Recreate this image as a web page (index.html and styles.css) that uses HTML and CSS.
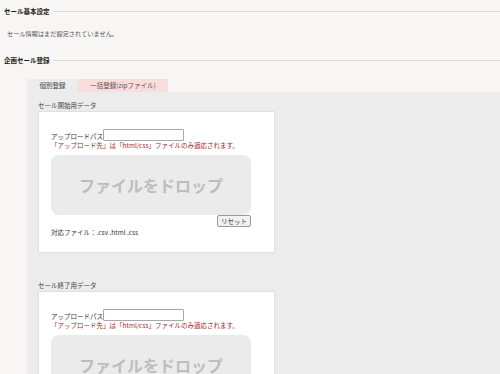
FILE: index.html
```html
<!DOCTYPE html>
<html lang="ja">
<head>
    <meta charset="UTF-8">
    <meta name="viewport" content="width=device-width, initial-scale=1.0">
    <title>セール設定</title>
    <link rel="stylesheet" href="styles.css">
</head>
<body>
    <h2 class="section-title"><span>セール基本設定</span></h2>
    <p class="notice">セール情報はまだ設定されていません。</p>

    <h2 class="section-title"><span>企画セール登録</span></h2>
    <div class="tabs">
        <div class="tab">個別登録</div>
        <div class="tab active">一括登録(zipファイル)</div>
    </div>
    <div class="panel">
        <div class="upload-group">
            <div class="group-label">セール開始用データ</div>
            <div class="upload-box">
                <div class="path-row">
                    <label>アップロードパス</label><input type="text" class="path-input">
                </div>
                <div class="warn">「アップロード先」は「html/css」ファイルのみ適応されます。</div>
                <div class="dropzone">ファイルをドロップ</div>
                <div class="reset-row"><button>リセット</button></div>
                <div class="formats">対応ファイル：.csv .html .css</div>
            </div>
        </div>
        <div class="upload-group">
            <div class="group-label">セール終了用データ</div>
            <div class="upload-box">
                <div class="path-row">
                    <label>アップロードパス</label><input type="text" class="path-input">
                </div>
                <div class="warn">「アップロード先」は「html/css」ファイルのみ適応されます。</div>
                <div class="dropzone">ファイルをドロップ</div>
                <div class="reset-row"><button>リセット</button></div>
                <div class="formats">対応ファイル：.csv .html .css</div>
            </div>
        </div>
    </div>
</body>
</html>
```

FILE: styles.css
```css
body {
    margin: 0;
    background: #f7f6f4;
    font-family: "Noto Sans CJK JP", "Noto Sans", sans-serif;
    font-size: 6.5px;
    color: #333;
    overflow: hidden;
}
.section-title {
    display: flex;
    align-items: center;
    gap: 3px;
    margin: 6px 0 0;
    padding-left: 4px;
    height: 10px;
    line-height: 10px;
    font-size: 6.5px;
    font-weight: bold;
    color: #222;
}
.section-title::after {
    content: "";
    flex: 1;
    height: 1px;
    background: #dcdcdc;
}
.notice {
    margin: 13px 0 16px;
    padding-left: 7px;
    height: 10px;
    line-height: 10px;
    color: #555;
    font-size: 6.2px;
}
.tabs {
    display: flex;
    margin: 14px 0 0 27px;
}
.tab {
    height: 13px;
    line-height: 13px;
    width: 51px;
    text-align: center;
    background: #ececec;
    color: #444;
}
.tab.active {
    width: 90px;
    background: #f9dcdc;
    color: #555;
}
.panel {
    margin-left: 27px;
    background: #ececec;
    padding: 8px 0 30px 11px;
    height: 400px;
}
.upload-group {
    margin-bottom: 27px;
}
.group-label {
    height: 10px;
    line-height: 10px;
    margin-bottom: 1px;
    color: #444;
}
.upload-box {
    width: 211px;
    background: #fff;
    border: 1px solid #e0e0e0;
    box-shadow: 0 0 1px rgba(0, 0, 0, 0.05);
    padding: 17px 12px 15px;
}
.path-row {
    display: flex;
    align-items: flex-end;
    height: 12px;
}
.path-row label {
    line-height: 9px;
    color: #333;
}
.path-input {
    box-sizing: border-box;
    width: 81px;
    height: 12px;
    margin: 0;
    padding: 0 2px;
    border: 1px solid #a8a8a8;
    border-radius: 1px;
    background: #fff;
}
.warn {
    height: 9px;
    line-height: 9px;
    color: #a52a2a;
    white-space: nowrap;
}
.dropzone {
    width: 200px;
    height: 60px;
    margin-top: 5px;
    border-radius: 8px;
    background: #ebebeb;
    display: flex;
    align-items: center;
    justify-content: center;
    font-size: 16px;
    font-weight: bold;
    color: #bdbdbd;
}
.reset-row {
    width: 200px;
    display: flex;
    justify-content: flex-end;
}
button {
    box-sizing: border-box;
    width: 34px;
    height: 12px;
    padding: 0;
    font-family: inherit;
    font-size: 6.5px;
    color: #333;
    background: #f2f2f2;
    border: 1px solid #999;
    border-radius: 2px;
}
.formats {
    height: 10px;
    line-height: 10px;
    color: #333;
}
```
